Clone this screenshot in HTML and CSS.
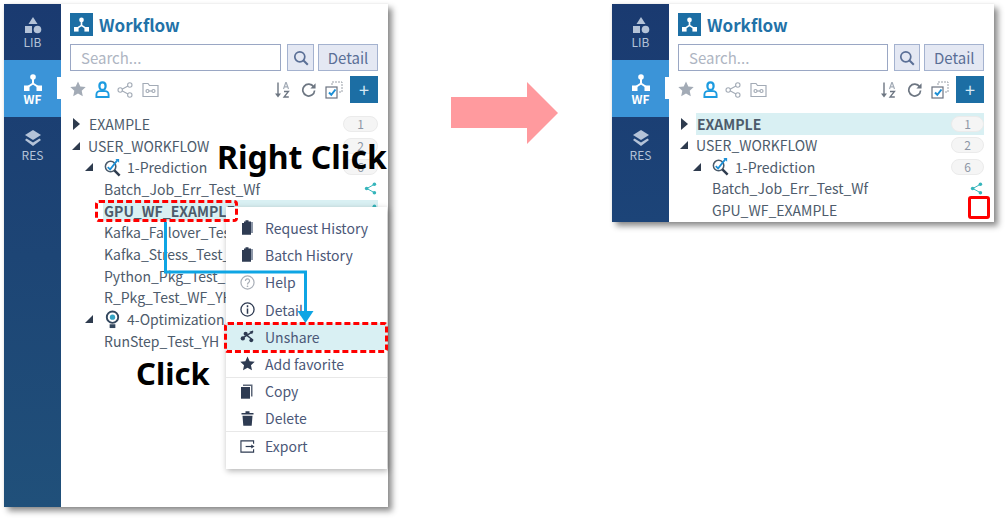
FILE: index.html
```html
<!DOCTYPE html>
<html lang="en">
<head>
  <meta charset="UTF-8">
  <title>Workflow - Unshare</title>
  <link rel="stylesheet" href="styles.css">
</head>
<body>
  <svg class="defs" width="0" height="0">
    <symbol id="i-flow" viewBox="0 0 18 17">
      <circle cx="9" cy="3" r="2.800"/><rect x="0" y="11.500" width="5.500" height="5.500"/><rect x="12.500" y="11.500" width="5.500" height="5.500"/>
      <path d="M9 5v4.500M9 9.500l-6 4M9 9.500l6 4" fill="none" stroke="currentColor" stroke-width="2"/>
    </symbol>
    <symbol id="i-lib" viewBox="0 0 18 17">
      <path d="M9 0l4.500 7h-9z"/><rect x="1" y="9" width="7" height="7"/><circle cx="13.500" cy="12.500" r="3.800"/>
    </symbol>
    <symbol id="i-res" viewBox="0 0 18 17">
      <path d="M9 0l8 5-8 5-8-5z"/><path d="M2.500 8.500L9 12.500l6.500-4L17 10l-8 6-8-6z"/>
    </symbol>
    <symbol id="i-star" viewBox="0 0 16 16">
      <path d="M8 .5l2.300 5 5.400.6-4 3.700 1.100 5.400L8 12.500l-4.800 2.700 1.100-5.400-4-3.700 5.400-.6z"/>
    </symbol>
    <symbol id="i-user" viewBox="0 0 16 18">
      <path d="M8 1.500c2 0 3.300 1.500 3.300 3.700S10 9.500 8 9.500 4.700 7.400 4.700 5.200 6 1.500 8 1.500z" fill="none" stroke="currentColor" stroke-width="2.400"/>
      <path d="M1.500 17v-2.500c0-2.500 2-3.800 3.500-3.800h6c1.500 0 3.500 1.300 3.500 3.800V17z" fill="none" stroke="currentColor" stroke-width="2"/>
    </symbol>
    <symbol id="i-share" viewBox="0 0 16 16">
      <path d="M12.500 3L3.500 8l9 5" fill="none" stroke="currentColor" stroke-width="1.200"/>
      <circle cx="12.800" cy="2.800" r="2.200"/><circle cx="3.200" cy="8" r="2.200"/><circle cx="12.800" cy="13.200" r="2.200"/>
    </symbol>
    <symbol id="i-share-line" viewBox="0 0 16 16">
      <g fill="none" stroke="currentColor" stroke-width="1.100">
        <path d="M11 4L5 7.300M5 8.700L11 12"/><circle cx="12.800" cy="3" r="2.200"/><circle cx="3.200" cy="8" r="2.200"/><circle cx="12.800" cy="13" r="2.200"/>
      </g>
    </symbol>
    <symbol id="i-folder" viewBox="0 0 17 16">
      <g fill="none" stroke="currentColor" stroke-width="1.200">
        <path d="M1 14.500V1.500h5l1.500 2h8.500v11z"/><circle cx="5.500" cy="9" r="1.500"/><circle cx="11.500" cy="9" r="1.500"/><path d="M7 9h3"/>
      </g>
    </symbol>
    <symbol id="i-search" viewBox="0 0 16 16">
      <circle cx="6.800" cy="6.800" r="5" fill="none" stroke="currentColor" stroke-width="1.700"/>
      <path d="M10.500 10.500l4.300 4.300" stroke="currentColor" stroke-width="2"/>
    </symbol>
    <symbol id="i-sort" viewBox="0 0 16 16">
      <path d="M4 .5v13" stroke="currentColor" stroke-width="1.400"/><path d="M1 11.500h6L4 15.500z"/>
      <path d="M9.500 7l2.300-6.500h.4L14.500 7M10.500 4.800h3" fill="none" stroke="#a3abb6" stroke-width="1.200"/>
      <path d="M10 9.500h4.500L10 15h4.800" fill="none" stroke="currentColor" stroke-width="1.300"/>
    </symbol>
    <symbol id="i-refresh" viewBox="0 0 16 16">
      <path d="M13.500 5.200A6.300 6.300 0 1 0 14.500 9" fill="none" stroke="currentColor" stroke-width="1.800"/>
      <path d="M15.500 1.200v5.600H10z"/>
    </symbol>
    <symbol id="i-check" viewBox="0 0 18 18">
      <path d="M7 4V1h10v10h-3" fill="none" stroke="#9aa0a8" stroke-dasharray="2 1"/>
      <rect x="1" y="6" width="11" height="11" fill="#fff" stroke="#6b7280" stroke-width="1.200"/>
      <path d="M4 11.500l2.300 2.300L10.500 8.500" fill="none" stroke="#1c8fd6" stroke-width="2"/>
    </symbol>
    <symbol id="i-predict" viewBox="0 0 20 20">
      <circle cx="8" cy="9" r="5.500" fill="none" stroke="#4a5a6a" stroke-width="1.600"/>
      <path d="M12 13l5.500 5.500" stroke="#2e3b4e" stroke-width="2.600"/>
      <path d="M5 9.500l2.500 2.500L15 2.500" fill="none" stroke="#1c8fd6" stroke-width="1.800"/>
      <path d="M13 1h4v4z" fill="#1c8fd6"/>
    </symbol>
    <symbol id="i-bulb" viewBox="0 0 16 20">
      <circle cx="8" cy="7.500" r="6" fill="none" stroke="#33475e" stroke-width="2"/>
      <circle cx="8" cy="7.500" r="2.800" fill="#36a4c4"/>
      <path d="M5 15h6v4H5z" fill="#33475e"/>
    </symbol>
    <symbol id="i-doc" viewBox="0 0 15 15">
      <path d="M2 3h2V1.500h1.500V.3h3v1.200H11V14.700H2z"/><path d="M11 2h2v11h-2z" fill="#8d97a8"/>
    </symbol>
    <symbol id="i-help" viewBox="0 0 16 16">
      <circle cx="8" cy="8" r="7" fill="none" stroke="#a9afb8" stroke-width="1.300"/>
      <path d="M5.800 6.300a2.200 2.200 0 1 1 3.400 1.800C8.300 8.700 8 9.200 8 10.200" fill="none" stroke="#a9afb8" stroke-width="1.300"/>
      <circle cx="8" cy="12" r=".9" fill="#a9afb8"/>
    </symbol>
    <symbol id="i-info" viewBox="0 0 16 16">
      <circle cx="8" cy="8" r="7" fill="none" stroke="currentColor" stroke-width="1.400"/>
      <path d="M8 3.500v2M8 7v5.500" stroke="currentColor" stroke-width="1.600"/>
    </symbol>
    <symbol id="i-unshare" viewBox="0 0 16 16">
      <path d="M14 2.500L3 9.500M14 12L7 6.500" fill="none" stroke="currentColor" stroke-width="1.500"/>
      <circle cx="3" cy="10" r="2.300"/><circle cx="12" cy="12" r="2"/><circle cx="6" cy="5" r="2.200"/><path d="M10 3l4-1.500-1 4z"/>
    </symbol>
    <symbol id="i-copy" viewBox="0 0 15 15">
      <path d="M1 3h9v11.700H1z"/><path d="M3 .5h9.500V12.500H11V2H3z" fill="#5d6778"/>
    </symbol>
    <symbol id="i-trash" viewBox="0 0 15 15">
      <path d="M1.500 2h12v1.500h-12zM5.500 .3h4V2h-4zM2.500 4.800h10l-.8 10H3.300z"/>
    </symbol>
    <symbol id="i-export" viewBox="0 0 16 14">
      <path d="M14.500 4V1H1v12h13.500v-3" fill="none" stroke="currentColor" stroke-width="1.200"/>
      <path d="M6 7h7" stroke="currentColor" stroke-width="1.300"/><path d="M12 4.800L15.500 7 12 9.200z"/>
    </symbol>
  </svg>

  <div class="stage">
    <section class="panel panel-full">
      <nav class="side">
        <div class="tab"><svg class="tab-icon"><use href="#i-lib"/></svg><span>LIB</span></div>
        <div class="tab active"><svg class="tab-icon"><use href="#i-flow"/></svg><span>WF</span></div>
        <div class="tab"><svg class="tab-icon"><use href="#i-res"/></svg><span>RES</span></div>
      </nav>
      <div class="main">
        <header class="title"><span class="title-mark"><svg><use href="#i-flow"/></svg></span>Workflow</header>
        <div class="search-row">
          <div class="search">Search...</div>
          <div class="btn btn-icon"><svg><use href="#i-search"/></svg></div>
          <div class="btn btn-detail">Detail</div>
        </div>
        <div class="tools">
          <svg class="t-star"><use href="#i-star"/></svg>
          <svg class="t-user"><use href="#i-user"/></svg>
          <svg class="t-share"><use href="#i-share-line"/></svg>
          <svg class="t-folder"><use href="#i-folder"/></svg>
          <svg class="t-sort"><use href="#i-sort"/></svg>
          <svg class="t-refresh"><use href="#i-refresh"/></svg>
          <svg class="t-check"><use href="#i-check"/></svg>
          <div class="t-add">+</div>
        </div>
        <ul class="tree">
          <li class="row lv0"><i class="caret closed"></i><span class="label">EXAMPLE</span><b class="badge">1</b></li>
          <li class="row lv0"><i class="caret"></i><span class="label">USER_WORKFLOW</span><b class="badge">2</b></li>
          <li class="row lv1"><i class="caret"></i><svg class="node-icon"><use href="#i-predict"/></svg><span class="label">1-Prediction</span><b class="badge">6</b></li>
          <li class="row lv2"><span class="label">Batch_Job_Err_Test_Wf</span><svg class="shared"><use href="#i-share"/></svg></li>
          <li class="row lv2"><span class="label selected">GPU_WF_EXAMPLE<svg class="shared"><use href="#i-share"/></svg></span></li>
          <li class="row lv2"><span class="label">Kafka_Failover_Test_Wf</span></li>
          <li class="row lv2"><span class="label">Kafka_Stress_Test_Wf</span></li>
          <li class="row lv2"><span class="label">Python_Pkg_Test_Wf</span></li>
          <li class="row lv2"><span class="label">R_Pkg_Test_WF_YH</span></li>
          <li class="row lv1"><i class="caret"></i><svg class="node-icon"><use href="#i-bulb"/></svg><span class="label">4-Optimization</span></li>
          <li class="row lv2"><span class="label">RunStep_Test_YH</span></li>
        </ul>
      </div>
    </section>

    <svg class="big-arrow" viewBox="0 0 107 62"><path d="M0 15h76V0l31 31-31 31V46H0z"/></svg>

    <section class="panel panel-after">
      <nav class="side">
        <div class="tab"><svg class="tab-icon"><use href="#i-lib"/></svg><span>LIB</span></div>
        <div class="tab active"><svg class="tab-icon"><use href="#i-flow"/></svg><span>WF</span></div>
        <div class="tab"><svg class="tab-icon"><use href="#i-res"/></svg><span>RES</span></div>
      </nav>
      <div class="main">
        <header class="title"><span class="title-mark"><svg><use href="#i-flow"/></svg></span>Workflow</header>
        <div class="search-row">
          <div class="search">Search...</div>
          <div class="btn btn-icon"><svg><use href="#i-search"/></svg></div>
          <div class="btn btn-detail">Detail</div>
        </div>
        <div class="tools">
          <svg class="t-star"><use href="#i-star"/></svg>
          <svg class="t-user"><use href="#i-user"/></svg>
          <svg class="t-share"><use href="#i-share-line"/></svg>
          <svg class="t-folder"><use href="#i-folder"/></svg>
          <svg class="t-sort"><use href="#i-sort"/></svg>
          <svg class="t-refresh"><use href="#i-refresh"/></svg>
          <svg class="t-check"><use href="#i-check"/></svg>
          <div class="t-add">+</div>
        </div>
        <ul class="tree">
          <li class="row lv0"><i class="caret closed"></i><span class="label selected">EXAMPLE<b class="badge">1</b></span></li>
          <li class="row lv0"><i class="caret"></i><span class="label">USER_WORKFLOW</span><b class="badge">2</b></li>
          <li class="row lv1"><i class="caret"></i><svg class="node-icon"><use href="#i-predict"/></svg><span class="label">1-Prediction</span><b class="badge">6</b></li>
          <li class="row lv2"><span class="label">Batch_Job_Err_Test_Wf</span><svg class="shared"><use href="#i-share"/></svg></li>
          <li class="row lv2"><span class="label">GPU_WF_EXAMPLE</span></li>
        </ul>
      </div>
    </section>

    <!-- context menu and the notes drawn over the first panel -->
    <ul class="menu">
      <li class="item"><svg><use href="#i-doc"/></svg>Request History</li>
      <li class="item"><svg><use href="#i-doc"/></svg>Batch History</li>
      <li class="item"><svg><use href="#i-help"/></svg>Help</li>
      <li class="item"><svg><use href="#i-info"/></svg>Detail</li>
      <li class="item on"><svg><use href="#i-unshare"/></svg>Unshare</li>
      <li class="item sep"><svg><use href="#i-star"/></svg>Add favorite</li>
      <li class="item"><svg><use href="#i-copy"/></svg>Copy</li>
      <li class="item sep"><svg><use href="#i-trash"/></svg>Delete</li>
      <li class="item"><svg><use href="#i-export"/></svg>Export</li>
    </ul>
    <div class="note note-right">Right Click</div>
    <div class="note note-click">Click</div>
    <div class="dash dash-row"></div>
    <div class="dash dash-item"></div>
    <svg class="route" viewBox="0 0 160 110">
      <path d="M1.500 0v50h140v41" fill="none" stroke="#0ea5e4" stroke-width="3"/>
      <path d="M133.500 89h16l-8 12z" fill="#0ea5e4"/>
    </svg>
    <div class="red-box"></div>
  </div>
</body>
</html>
```

FILE: styles.css
```css
* { box-sizing: border-box; }
html, body { margin: 0; padding: 0; background: #fff; }
body { font-family: "Noto Sans CJK KR", "Noto Sans", sans-serif; color: #4d5b6b; overflow: hidden; }
ul { list-style: none; margin: 0; padding: 0; }
svg { fill: currentColor; }
.defs { position: absolute; }

.stage { position: relative; display: flex; align-items: flex-start; width: 1008px; height: 520px; padding: 4px; }
.panel { display: flex; background: #fff; box-shadow: 4px 4px 6px rgba(0, 0, 0, .45), 0 0 2px rgba(0, 0, 0, .08); overflow: hidden; flex: none; }
.panel-full { width: 384px; height: 503px; }
.panel-after { width: 382px; height: 218px; margin-left: 54px; }
.big-arrow { width: 107px; height: 62px; margin: 78px 0 0 63px; flex: none; fill: #ff9a9e; }

/* left nav */
.side { width: 57px; flex: none; background: linear-gradient(#1a3a70, #20507a); }
.panel-after .side { background: linear-gradient(#1a3a70, #1c4478); }
.tab { position: relative; height: 56px; display: flex; flex-direction: column; align-items: center; padding-top: 13px; color: #b4c3d8; font-size: 12px; line-height: 14px; }
.tab.active { height: 57px; background: #3b94d8; color: #fff; font-weight: 700; padding-top: 14px; }
.tab.active::after { content: ""; position: absolute; right: 0; top: 17px; width: 4px; height: 22px; background: #fff; }
.tab-icon { width: 18px; height: 17px; margin-bottom: 1px; }

.main { flex: 1; min-width: 0; padding: 9px 10px 0 9px; }
.title { display: flex; align-items: center; gap: 6px; height: 23px; font-size: 17px; font-weight: 700; color: #2272a8; }
.title-mark { width: 23px; height: 23px; background: #1c6ea4; color: #fff; display: flex; align-items: center; justify-content: center; }
.title-mark svg { width: 15px; height: 15px; }

.search-row { display: flex; margin-top: 8px; height: 27px; }
.search { width: 211px; border: 1px solid #9aa7c4; font-size: 15px; line-height: 25px; padding-left: 10px; color: #aeb5c2; }
.btn { border: 1px solid #a4b2cf; background: #e4e8f3; color: #5a6f96; display: flex; align-items: center; justify-content: center; font-size: 15px; }
.btn-icon { width: 27px; margin-left: 6px; }
.btn-icon svg { width: 16px; height: 16px; }
.btn-detail { width: 60px; margin-left: 4px; }

.tools { display: flex; align-items: center; height: 27px; margin-top: 5px; color: #a3abb6; }
.t-star { width: 16px; height: 16px; margin-right: 9px; margin-top: -2px; }
.t-user { width: 15px; height: 17px; margin-right: 7px; color: #1c9be0; }
.t-share { width: 16px; height: 16px; margin-right: 9px; }
.t-folder { width: 17px; height: 16px; }
.t-sort { width: 16px; height: 16px; margin-left: auto; color: #6d7682; }
.t-refresh { width: 15px; height: 15px; margin-left: 11px; color: #6d7682; }
.t-check { width: 18px; height: 18px; margin-left: 9px; }
.t-add { width: 28px; height: 27px; margin-left: 7px; background: #1c6ea4; color: #d8e8f4; font-size: 18px; line-height: 26px; text-align: center; }

.tree { margin-top: 10px; font-size: 14px; }
.row { display: flex; align-items: center; height: 21.5px; white-space: nowrap; }
.panel-full .row { height: 21.7px; }
.lv0 { padding-left: 2px; }
.lv1 { padding-left: 15px; }
.lv2 { padding-left: 33px; }
.caret { width: 0; height: 0; flex: none; border-style: solid; border-width: 0 0 8px 8px; border-color: transparent transparent #2e3b4e transparent; margin-right: 7px; }
.caret.closed { border-width: 6px 0 6px 7px; border-color: transparent transparent transparent #2e3b4e; margin-right: 8px; margin-left: 1px; }
.lv1 .caret { margin-right: 10px; }
.label { flex: 1; min-width: 0; display: flex; align-items: center; height: 100%; padding-left: 1px; }
.lv1 .label { padding-left: 5px; }
.selected { background: #d9f0f3; font-weight: 700; }
.node-icon { width: 19px; height: 19px; flex: none; }
.badge { flex: none; margin-left: auto; width: 35px; height: 16px; border: 1px solid #ebebeb; border-radius: 8px; background: #f5f5f5; color: #8d97a6; font-size: 12px; font-weight: 400; line-height: 14px; text-align: center; }
.shared { width: 13px; height: 13px; margin-left: auto; margin-right: 1px; color: #35b5bb; flex: none; }
.panel-after .badge { width: 33px; }

.menu { position: absolute; left: 226px; top: 207px; width: 161px; padding: 7px 0 9px; background: #fff; box-shadow: 1px 2px 6px rgba(0, 0, 0, .3); font-size: 14px; color: #4b5878; }
.item { display: flex; align-items: center; height: 27.3px; padding-left: 14px; }
.item svg { width: 15px; height: 15px; margin-right: 10px; color: #2e3b52; flex: none; }
.item.on { background: #d9f0f3; }
.sep { border-bottom: 1px solid #e8e8e8; }

.note { position: absolute; color: #000; font-weight: 700; font-family: "Noto Sans", sans-serif; line-height: 1; }
.note-right { left: 217px; top: 141px; font-size: 32px; }
.note-click { left: 136px; top: 358px; font-size: 31px; }
.dash { position: absolute; border: 3px dashed #f00; border-radius: 4px; }
.dash-row { left: 95px; top: 200px; width: 143px; height: 22px; }
.dash-item { left: 224px; top: 322px; width: 164px; height: 31px; }
.route { position: absolute; left: 164px; top: 222px; width: 160px; height: 110px; }
.red-box { position: absolute; left: 968px; top: 196px; width: 22px; height: 23px; border: 3px solid #f00; border-radius: 3px; }
```
